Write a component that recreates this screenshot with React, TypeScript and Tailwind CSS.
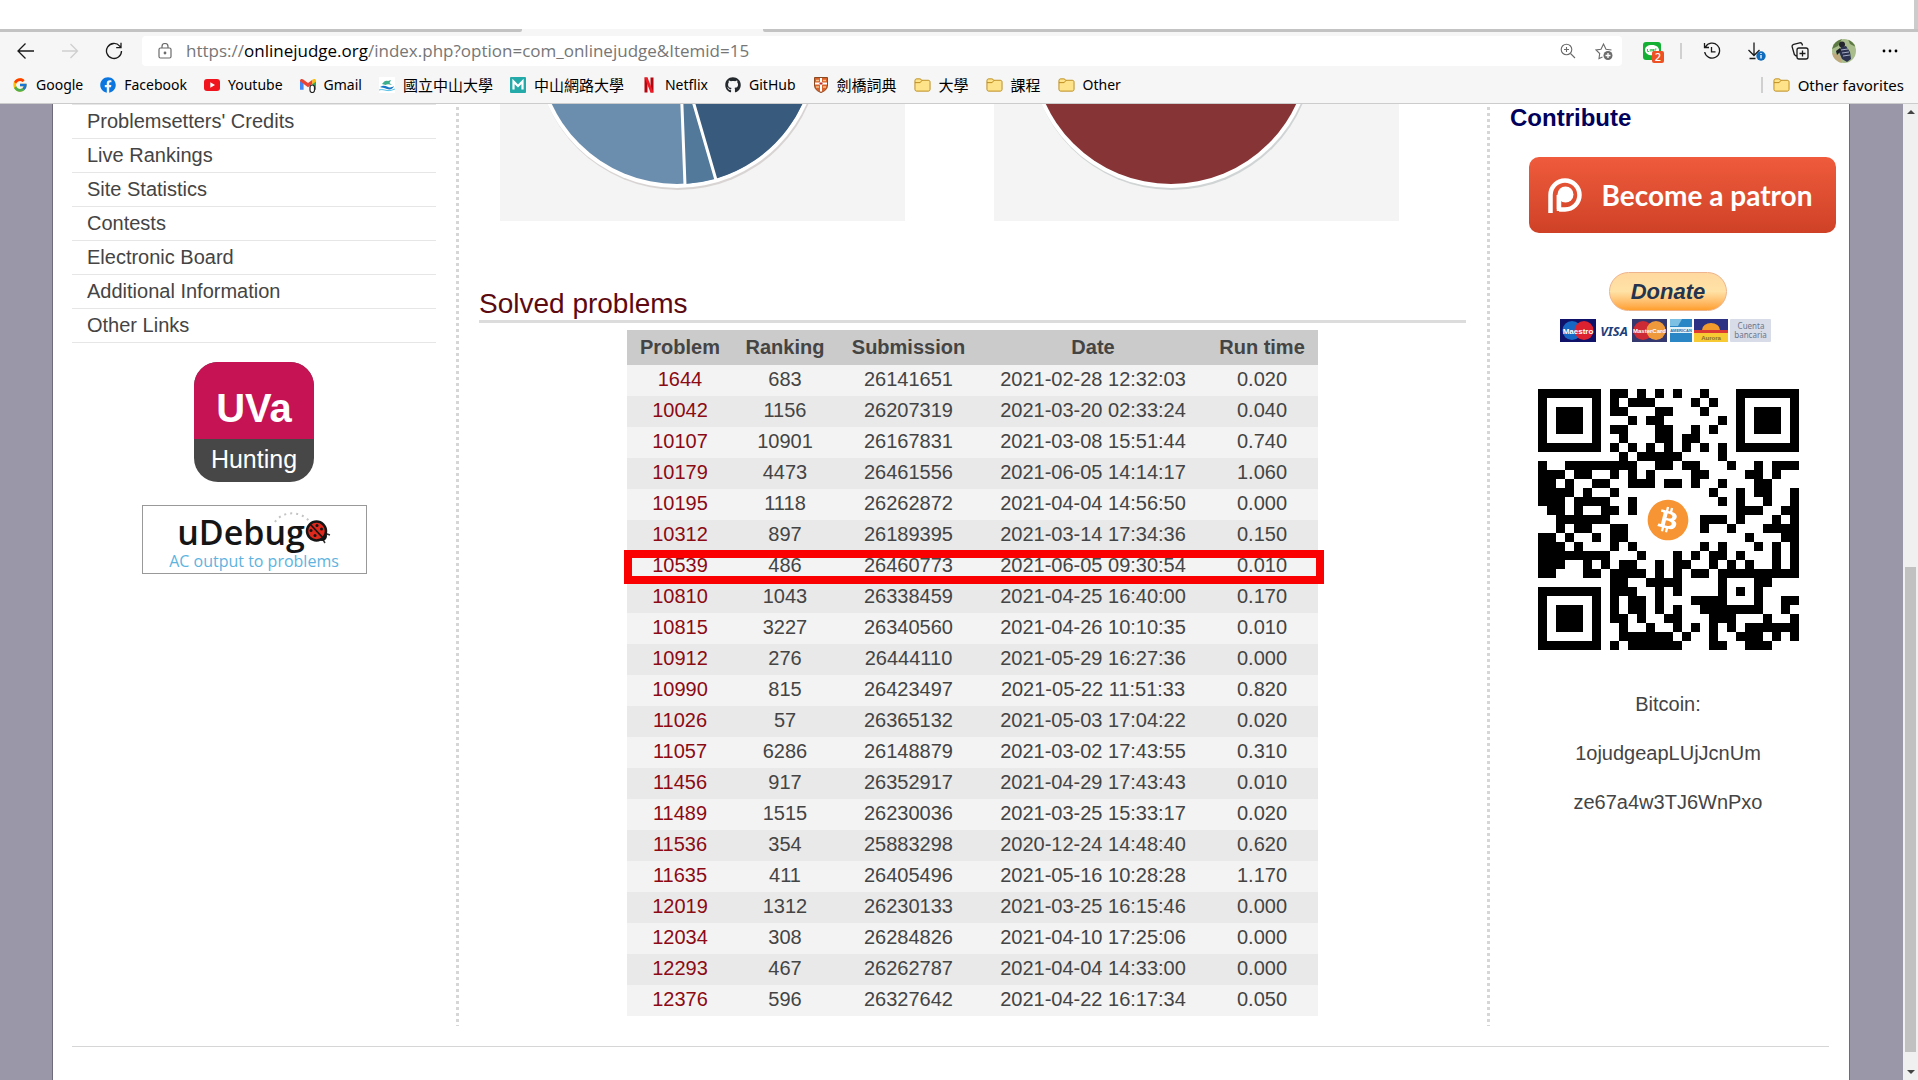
import React from 'react';
import type { ReactNode } from 'react';
import { FaFacebook, FaGithub, FaBitcoin } from 'react-icons/fa';
import { FcGoogle } from 'react-icons/fc';

type Row = [string, string, string, string, string];

const rows: Row[] = [
  ['1644', '683', '26141651', '2021-02-28 12:32:03', '0.020'],
  ['10042', '1156', '26207319', '2021-03-20 02:33:24', '0.040'],
  ['10107', '10901', '26167831', '2021-03-08 15:51:44', '0.740'],
  ['10179', '4473', '26461556', '2021-06-05 14:14:17', '1.060'],
  ['10195', '1118', '26262872', '2021-04-04 14:56:50', '0.000'],
  ['10312', '897', '26189395', '2021-03-14 17:34:36', '0.150'],
  ['10539', '486', '26460773', '2021-06-05 09:30:54', '0.010'],
  ['10810', '1043', '26338459', '2021-04-25 16:40:00', '0.170'],
  ['10815', '3227', '26340560', '2021-04-26 10:10:35', '0.010'],
  ['10912', '276', '26444110', '2021-05-29 16:27:36', '0.000'],
  ['10990', '815', '26423497', '2021-05-22 11:51:33', '0.820'],
  ['11026', '57', '26365132', '2021-05-03 17:04:22', '0.020'],
  ['11057', '6286', '26148879', '2021-03-02 17:43:55', '0.310'],
  ['11456', '917', '26352917', '2021-04-29 17:43:43', '0.010'],
  ['11489', '1515', '26230036', '2021-03-25 15:33:17', '0.020'],
  ['11536', '354', '25883298', '2020-12-24 14:48:40', '0.620'],
  ['11635', '411', '26405496', '2021-05-16 10:28:28', '1.170'],
  ['12019', '1312', '26230133', '2021-03-25 16:15:46', '0.000'],
  ['12034', '308', '26284826', '2021-04-10 17:25:06', '0.000'],
  ['12293', '467', '26262787', '2021-04-04 14:33:00', '0.000'],
  ['12376', '596', '26327642', '2021-04-22 16:17:34', '0.050'],
];

const menu = [
  "Problemsetters' Credits",
  'Live Rankings',
  'Site Statistics',
  'Contests',
  'Electronic Board',
  'Additional Information',
  'Other Links',
];

/* Dark module runs of each QR row, as "start-end" or a single column. */
const qrRows = [
  '0-6 8-9 11 13 15 18 22-28',
  '0 6 8 10-12 17 19 22 28',
  '0 2-4 6 8-9 13-14 18 22 24-26 28',
  '0 2-4 6 10 12-13 20 22 24-26 28',
  '0 2-4 6 8-9 13-14 17 19 22 24-26 28',
  '0 6 9 13-14 16-17 22 28',
  '0-6 8 10 12 14 16 18 20 22-28',
  '9 11-15 20',
  '0 3-10 13-14 16-17 21 24 26-28',
  '0-2 4-5 8 10 12 17-18 23-24 26',
  '0-1 3 6-7 10-12 14-15 17 20 24-25',
  '0-3 5 8 19 22 24-25 28',
  '0-2 4-7 10 20 22 25 28',
  '1-2 4 7-8 10 22-24 27-28',
  '2-7 18-20 22 26 28',
  '2 4-5 8-9 18 21 25-28',
  '0-1 3 6 8-9 23 27-28',
  '0-2 4 8 10 18 20 24 26 28',
  '0-7 11 15 17 19-20 22 26 28',
  '0-2 5 7 9-10 13 15-16 19 21 23 26 28',
  '0-1 5-6 8-11 13 15 17-18 20-28',
  '8-9 12-15 20 24-25',
  '0-6 8-10 13 15 20 22 24',
  '0 6 8 10-11 13 17-20 24 27-28',
  '0 2-4 6 8 10-11 13 15 18-24 27',
  '0 2-4 6 8-9 11 14-15 19-21 25 28',
  '0 2-4 6 9 12 15 17 19 21 23-28',
  '0 6 9-14 16 19 22-24 26 28',
  '0-6 8 10-15 19-20 23-25',
];

function QrCode() {
  return (
    <div className="relative size-[261px]">
      <svg viewBox="0 0 29 29" className="size-full" shapeRendering="crispEdges" role="img" aria-label="Bitcoin address QR code">
        {qrRows.flatMap((line, y) =>
          line.split(' ').map((run) => {
            const [a, b] = run.split('-').map(Number);
            const end = b === undefined ? a : b;
            return <rect key={`${y}-${a}`} x={a} y={y} width={end - a + 1} height={1} />;
          }),
        )}
      </svg>
      <FaBitcoin className="absolute inset-0 m-auto size-[42px] text-[#f79433]" />
    </div>
  );
}

function Folder() {
  return (
    <svg viewBox="0 0 18 16" className="h-4 w-[17px]" fill="#ffe38a" stroke="#b98a1c" strokeWidth="1">
      <path d="M1 3.5C1 2.2 1.7 1.500 3 1.500h3.200c1 0 1.300.6 2 1.500H15c1.300 0 2 .7 2 2v7.500c0 1.300-.7 2-2 2H3c-1.300 0-2-.7-2-2z" />
      <path d="M1 5.500h5.500l2-2.500" fill="none" />
    </svg>
  );
}

function YoutubeIcon() {
  return (
    <svg viewBox="0 0 16 16" className="size-4">
      <rect x="0" y="2" width="16" height="12" rx="3" fill="#f0141e" />
      <path d="M6.300 5.200v5.600L11 8z" fill="#fff" />
    </svg>
  );
}

function GmailIcon() {
  return (
    <svg viewBox="0 0 16 16" className="size-4">
      <path d="M0 3.500v9.300h3.600V6.500z" fill="#4285f4" />
      <path d="M12.400 6.500v6.300H16V3.500z" fill="#34a853" />
      <path d="M0 4c0-2 2-2.500 3.600-1.300L8 6l4.400-3.300v4.100L8 10.200 0 4.300z" fill="#ea4335" />
      <path d="M12.400 2.700C14 1.500 16 2 16 4v.6l-3.600 2.700z" fill="#fbbc04" />
      <rect x="10" y="8" width="4.500" height="7.500" rx="2.200" fill="#fff" stroke="#222" strokeWidth="1.200" />
    </svg>
  );
}

function WaveIcon() {
  return (
    <svg viewBox="0 0 16 16" className="size-4">
      <rect width="16" height="16" fill="#fff" />
      <path d="M3 7c2-3 4-4 6-3l3-1-1.500 3L13 8c-3-1-5-1-6.500 0z" fill="#3cae8e" />
      <path d="M1 10c3-2 5-1.500 7-.5s4 1.500 7-.5c-1 3-4 4-7 3s-5-1.500-7-2z" fill="#1677c8" />
      <path d="M0 13c3-1 5 0 8 .5S13 13 16 12" stroke="#59c3e8" fill="none" />
    </svg>
  );
}

function MIcon() {
  return (
    <svg viewBox="0 0 16 16" className="size-4">
      <rect width="16" height="16" rx="1" fill="#24aaa8" />
      <path d="M3.500 12.500v-8L8 9l4.500-4.500v8" fill="none" stroke="#fff" strokeWidth="2.200" />
    </svg>
  );
}

function NetflixIcon() {
  return (
    <svg viewBox="0 0 16 16" className="size-4">
      <path d="M3.500.500h3v15h-3zM9.500.500h3v15h-3z" fill="#b1060f" />
      <path d="M3.500.500h3l6 15h-3z" fill="#ef1a25" />
    </svg>
  );
}

function ShieldIcon() {
  return (
    <svg viewBox="0 0 16 16" className="size-4">
      <path d="M1.500.500h13v7.500c0 4-2.500 6-6.500 7.500-4-1.500-6.500-3.500-6.500-7.500z" fill="#d9622b" stroke="#8b4a22" />
      <path d="M8 1v13.500M2 6.500h12" stroke="#fff" strokeWidth="2" />
      <path d="M3 3.500h3M10 3.500h3M3 10h3M10 10h3" stroke="#f6c48d" strokeWidth="1.500" />
      <path d="M8 5v3M6.500 6.500h3" stroke="#c02a2a" />
    </svg>
  );
}

const bookmarks: { label: string; icon: ReactNode; cjk?: boolean }[] = [
  { label: 'Google', icon: <FcGoogle className="size-4" /> },
  { label: 'Facebook', icon: <FaFacebook className="size-4 text-[#0b76e0]" /> },
  { label: 'Youtube', icon: <YoutubeIcon /> },
  { label: 'Gmail', icon: <GmailIcon /> },
  { label: '國立中山大學', icon: <WaveIcon />, cjk: true },
  { label: '中山網路大學', icon: <MIcon />, cjk: true },
  { label: 'Netflix', icon: <NetflixIcon /> },
  { label: 'GitHub', icon: <FaGithub className="size-4 text-[#24292e]" /> },
  { label: '劍橋詞典', icon: <ShieldIcon />, cjk: true },
  { label: '大學', icon: <Folder />, cjk: true },
  { label: '課程', icon: <Folder />, cjk: true },
  { label: 'Other', icon: <Folder /> },
];

function ToolButton({ label, children }: { label: string; children: ReactNode }) {
  return (
    <button type="button" aria-label={label} className="flex size-7 shrink-0 items-center justify-center">
      {children}
    </button>
  );
}

function Toolbar() {
  return (
    <div className="flex h-[38px] items-center pr-[14px] pl-3">
      <div className="flex w-[130px] gap-4">
        <ToolButton label="Back">
          <svg viewBox="0 0 18 18" className="size-[18px]" fill="none" stroke="#1a1a1a" strokeWidth="1.300">
            <path d="M17 9H1.500M8.500 1.500 1 9l7.500 7.500" />
          </svg>
        </ToolButton>
        <ToolButton label="Forward">
          <svg viewBox="0 0 18 18" className="size-[18px]" fill="none" stroke="#cfcfcf" strokeWidth="1.300">
            <path d="M1 9h15.500M9.500 2 16.500 9l-7 7" />
          </svg>
        </ToolButton>
        <ToolButton label="Refresh">
          <svg viewBox="0 0 18 18" className="size-[18px]" fill="none" stroke="#1a1a1a" strokeWidth="1.300">
            <path d="M16.500 9A7.500 7.500 0 1 1 14.700 4.100L15.800 5.500M16 .800V5.600H11.200" />
          </svg>
        </ToolButton>
      </div>
      <div className="flex h-[30px] flex-1 items-center rounded bg-white pr-1 pl-4">
        <svg viewBox="0 0 14 16" className="h-4 w-[14px]" fill="none" stroke="#6b6b6b" strokeWidth="1.200">
          <rect x="1" y="5" width="12" height="10" rx="1.500" />
          <path d="M4 5V3.500a3 3 0 0 1 6 0V5" />
          <circle cx="7" cy="10" r=".8" fill="#6b6b6b" />
        </svg>
        <p className="flex-1 pl-[14px] font-['Open_Sans','Noto_Sans_CJK_TC',sans-serif] text-[17px] leading-6 text-[#767676]">
          https://<span className="text-black">onlinejudge.org</span>/index.php?option=com_onlinejudge&amp;Itemid=15
        </p>
        <div className="flex gap-2">
          <ToolButton label="Zoom">
            <svg viewBox="0 0 16 16" className="size-4" fill="none" stroke="#6b6b6b" strokeWidth="1.100">
              <circle cx="6.500" cy="6.500" r="5.300" />
              <path d="M10.500 10.500 15 15M4 6.500h5M6.500 4v5" />
            </svg>
          </ToolButton>
          <ToolButton label="Add to favorites">
            <svg viewBox="0 0 18 18" className="size-[18px]" fill="none" stroke="#6b6b6b" strokeWidth="1.100">
              <path d="M7.500 15 4 16.500l.7-5L1 8l5-.8L8.500 2 11 7.200l5.500.8" />
              <circle cx="13" cy="13.500" r="4.500" fill="#6b6b6b" stroke="none" />
              <path d="M10.500 13.500h5M13 11v5" stroke="#fff" strokeWidth="1.300" />
            </svg>
          </ToolButton>
        </div>
      </div>
      <div className="flex items-center gap-4 pl-[18px]">
        <button type="button" aria-label="LINE, 2 messages" className="relative flex size-6 items-center justify-center">
          <svg viewBox="0 0 18 18" className="size-[18px]">
            <rect width="18" height="18" rx="3" fill="#14b034" />
            <path d="M9 3c4.500 0 7 2.500 7 5 0 3-3.500 5.500-7 7.500v-2.200c-4 0-7-2.300-7-5.300s2.500-5 7-5z" fill="#fff" />
            <path d="M4.500 7v2.500H6M7.300 7v2.500M8.800 9.500V7l1.700 2.500V7M13.500 7H12v2.500h1.500" fill="none" stroke="#14b034" strokeWidth=".8" />
          </svg>
          <span className="absolute top-3 left-3 flex size-3 items-center justify-center rounded-xs bg-[#ee5124] font-['Noto_Sans',sans-serif] text-[11px] leading-3 font-medium text-white">
            2
          </span>
        </button>
        <span className="h-4 w-0.5 bg-[#d0d0d0]" />
        <div className="flex items-center gap-4">
          <ToolButton label="History">
            <svg viewBox="0 0 18 18" className="size-[18px]" fill="none" stroke="#1a1a1a" strokeWidth="1.300">
              <path d="M2.500 5A7.500 7.500 0 1 1 1.700 10M1.500 1v4.500H6M8.500 5v4.800h4" />
            </svg>
          </ToolButton>
          <ToolButton label="Downloads">
            <svg viewBox="0 0 20 20" className="size-5" fill="none" stroke="#1a1a1a" strokeWidth="1.300">
              <path d="M8 1.500v13M2.500 9 8 14.500 13.500 9M3.500 17.500h6" />
              <circle cx="15" cy="15" r="4.700" fill="#0f6cbd" stroke="none" />
              <path d="M15 14v3.500M15 12v1" stroke="#fff" />
            </svg>
          </ToolButton>
          <ToolButton label="Collections">
            <svg viewBox="0 0 18 18" className="size-[18px]" fill="none" stroke="#1a1a1a" strokeWidth="1.300">
              <rect x="6" y="6" width="11" height="11" rx="2" />
              <path d="M11.500 8.500v6M8.500 11.500h6M3.500 13 1.200 5c-.4-1.500.2-2.300 1.500-2.700l6-1.500c1.300-.3 2 .2 2.500 1.500l.3 1.200M6 14c-1 0-2-.5-2.500-1.500" />
            </svg>
          </ToolButton>
        </div>
        <button type="button" aria-label="Profile" className="mr-1 ml-0.5">
          <svg viewBox="0 0 24 24" className="size-6">
            <defs>
              <clipPath id="avatar">
                <circle cx="12" cy="12" r="12" />
              </clipPath>
            </defs>
            <g clipPath="url(#avatar)">
              <rect width="24" height="24" fill="#a9bd8c" />
              <path d="M0 0h10l-4 7-6 3zM16 0h8v8l-6-3z" fill="#5e7a44" />
              <path d="M0 14l8 2 2 8H0z" fill="#bfa97c" />
              <circle cx="10" cy="5.500" r="3" fill="#24262e" />
              <path d="M9 8l5-1 4 6 1 7-4 3-5-3-3-7z" fill="#2b3350" />
              <path d="M9 11l7-1M10 14l7-1M11 17l7-1" stroke="#c3cbe0" strokeWidth=".8" />
              <path d="M4 12l4-3 1 3-4 4z" fill="#1d1f27" />
            </g>
          </svg>
        </button>
        <ToolButton label="Settings and more">
          <svg viewBox="0 0 16 4" className="h-1 w-4">
            <circle cx="2" cy="2" r="1.400" />
            <circle cx="8" cy="2" r="1.400" />
            <circle cx="14" cy="2" r="1.400" />
          </svg>
        </ToolButton>
      </div>
    </div>
  );
}

function BookmarkBar() {
  return (
    <nav
      aria-label="Favorites bar"
      className="flex h-[34px] items-center justify-between border-b border-[#cccccc] pr-[14px] pb-1 pl-3 font-['Noto_Sans','Noto_Sans_CJK_TC',sans-serif] text-black"
    >
      <div className="flex gap-[17px]">
        {bookmarks.map((b) => (
          <a key={b.label} href="#" className="flex items-center gap-2 whitespace-nowrap">
            {b.icon}
            <span className={b.cjk ? 'text-[15px] leading-6' : 'text-sm leading-6'}>{b.label}</span>
          </a>
        ))}
      </div>
      <a href="#" className="flex items-center gap-2 text-[15px] leading-6">
        <span className="mr-0.5 h-4 w-0.5 bg-[#d0d0d0]" />
        <Folder />
        Other favorites
      </a>
    </nav>
  );
}

function Dots() {
  return <div className="bg-[repeating-linear-gradient(to_bottom,#ffffff_0px,#ffffff_3px,#d6d6d6_3px,#d6d6d6_6px)]" />;
}

function Sidebar() {
  return (
    <aside className="flex flex-col items-center pr-5">
      <ul className="w-full border-t border-[#e6e6e6]">
        {menu.map((m) => (
          <li key={m} className="h-[34px] border-b border-[#e6e6e6] pl-[15px] leading-8">
            <a href="#">{m}</a>
          </li>
        ))}
      </ul>
      <a href="#" className="mt-[19px] block w-[120px] overflow-hidden rounded-3xl bg-[#474747] text-center text-white">
        <span className="block h-[77px] bg-[#c51353] pt-6 text-[40px] leading-[44px] font-bold">UVa</span>
        <span className="block h-[43px] text-[25px] leading-10">Hunting</span>
      </a>
      <a
        href="#"
        className="relative mt-[23px] flex h-[69px] w-[225px] flex-col items-center border border-[#999999] font-['Open_Sans',sans-serif]"
      >
        <span className="flex items-center pt-2">
          <span className="text-[34px] leading-9 font-semibold text-[#151515]">uDebug</span>
          <svg viewBox="0 0 26 26" className="size-[26px]">
            <path d="M19 14l6 2M17 19l3 5" stroke="#333" strokeWidth="1.500" />
            <circle cx="17" cy="17" r="5" fill="#111" />
            <circle cx="11.500" cy="12" r="9.500" fill="#e0281c" stroke="#151515" strokeWidth="2.500" />
            <path d="M5 5l14 15" stroke="#151515" strokeWidth="1.800" />
            <g fill="#151515">
              <circle cx="12" cy="6.500" r="1.500" />
              <circle cx="16.500" cy="10" r="1.500" />
              <circle cx="6" cy="11.500" r="1.500" />
              <circle cx="10" cy="16.500" r="1.500" />
            </g>
          </svg>
        </span>
        <svg viewBox="0 0 40 14" className="absolute top-1 left-[130px] h-[14px] w-10">
          <path d="M2 12C9 1 28 0 37 12" fill="none" stroke="#c4c4c4" strokeWidth="2" strokeDasharray="2 4" />
        </svg>
        <span className="text-base leading-[22px] font-medium text-[#5db3df]">AC output to problems</span>
      </a>
    </aside>
  );
}

function Pies() {
  return (
    <div className="grid grid-cols-2">
      <div className="pl-[21px]">
        <svg viewBox="0 0 405 117" className="h-[117px] w-[405px] bg-[#f4f4f4]" role="img" aria-label="Submission statistics">
          <circle cx="178" cy="-56" r="142" fill="#d9d4d4" />
          <circle cx="177" cy="-58" r="142" fill="#fff" />
          <circle cx="177" cy="-58" r="138" fill="#6b8dae" />
          <path d="M181 -58 185 80A138 138 0 0 0 215 75L175 -58z" fill="#52789a" />
          <path d="M177 -58 215 75A138 138 0 0 0 315 -58z" fill="#385a7c" />
          <path d="M181.500 -10 185 81M191 -10 216 76" stroke="#fff" strokeWidth="3" />
        </svg>
      </div>
      <div className="pl-[21px]">
        <svg viewBox="0 0 405 117" className="h-[117px] w-[405px] bg-[#f4f4f4]" role="img" aria-label="Verdict statistics">
          <circle cx="178" cy="-56" r="142" fill="#d0d4d4" />
          <circle cx="177" cy="-58" r="142" fill="#fff" />
          <circle cx="177" cy="-58" r="138" fill="#863436" />
        </svg>
      </div>
    </div>
  );
}

function SolvedTable() {
  return (
    <div className="mx-auto mt-[7px] w-[691px]">
      <table className="w-full table-fixed border-collapse text-center">
        <colgroup>
          <col className="w-[106px]" />
          <col className="w-[104px]" />
          <col className="w-[143px]" />
          <col className="w-[226px]" />
          <col className="w-[112px]" />
        </colgroup>
        <thead>
          <tr className="h-[35px] bg-[#cbcbcb] text-[#444444]">
            {['Problem', 'Ranking', 'Submission', 'Date', 'Run time'].map((h) => (
              <th key={h} scope="col" className="p-0 pb-0.5 leading-7 font-bold">
                {h}
              </th>
            ))}
          </tr>
        </thead>
        <tbody>
          {rows.map((r) => (
            <tr key={r[0]} className="h-[31px] odd:bg-[#f3f3f3] even:bg-[#e9e9e9]">
              <td className="relative p-0 align-top leading-7">
                <a href="#" className="text-[#8c0a14]">
                  {r[0]}
                </a>
                {r[0] === '10539' && <span className="absolute -top-px -left-[3px] h-[34px] w-[700px] border-8 border-[#fb0000]" />}
              </td>
              {r.slice(1).map((c, i) => (
                <td key={i} className="p-0 align-top leading-7">
                  {c}
                </td>
              ))}
            </tr>
          ))}
        </tbody>
      </table>
    </div>
  );
}

function PaymentCards() {
  return (
    <svg viewBox="0 0 212 23" className="mt-2 mr-1 h-[23px] w-[212px]" fontFamily="'Liberation Sans', sans-serif" fontWeight="bold">
      <rect width="36" height="23" fill="#10126a" />
      <circle cx="12" cy="11.500" r="9.500" fill="#1768c4" />
      <circle cx="24" cy="11.500" r="9.500" fill="#dc2230" />
      <text x="18" y="14.500" fontSize="8" fill="#fff" textAnchor="middle">Maestro</text>
      <text x="54" y="17" fontSize="13" fontStyle="italic" fill="#1c3f7c" textAnchor="middle" fontFamily="'Noto Sans', sans-serif">VISA</text>
      <rect x="72" width="35" height="23" fill="#34386f" />
      <circle cx="83" cy="11.500" r="9.500" fill="#cc2a34" />
      <circle cx="96" cy="11.500" r="9.500" fill="#ee9a3c" />
      <text x="89.500" y="14" fontSize="6" fill="#fff" textAnchor="middle">MasterCard</text>
      <rect x="110" width="22" height="23" fill="#2a86c4" />
      <path d="M110 0h12l-4 7h-8z" fill="#7cc0e4" />
      <path d="M110 8h22v6h-22z" fill="#e4f2fa" />
      <text x="121" y="13" fontSize="4" fill="#2a6fa8" textAnchor="middle">AMERICAN</text>
      <rect x="134" width="34" height="23" fill="#2c3184" />
      <path d="M134 11h34v3h-34z" fill="#dd3a34" />
      <path d="M142 11a9 7 0 0 1 18 0z" fill="#f29a2c" />
      <rect x="134" y="14" width="34" height="9" fill="#f7c932" />
      <text x="151" y="21" fontSize="6" fill="#8a6c2c" textAnchor="middle">Aurora</text>
      <rect x="170" width="41" height="23" rx="1" fill="#d8dce8" />
      <g fill="#6c768c" fontSize="8" fontWeight="normal" textAnchor="middle" fontFamily="'Noto Sans', sans-serif">
        <text x="191" y="10">Cuenta</text>
        <text x="190.500" y="19">bancaria</text>
      </g>
    </svg>
  );
}

function Contribute() {
  return (
    <aside className="pl-5">
      <h3 className="text-2xl leading-7 font-bold text-[#00005c]">Contribute</h3>
      <div className="flex w-[316px] flex-col items-center">
        <a
          href="#"
          className="mt-[25px] ml-[28px] flex h-[76px] w-[307px] shrink-0 items-center rounded-[10px] bg-linear-to-b from-[#ef5b3c] to-[#cf4126] pl-[19px] text-white"
        >
          <svg viewBox="0 0 34 36" className="h-9 w-[34px]" fill="none" stroke="#fff">
            <path d="M2.500 36V18a14.500 14.500 0 1 1 14.500 14.500H11" strokeWidth="4.500" />
            <path d="M11 34V18" strokeWidth="4.500" />
            <circle cx="17.500" cy="17.500" r="8" fill="#fff" stroke="none" />
            <path d="M10.500 18v14" strokeWidth="3.500" />
          </svg>
          <span className="pl-5 font-['Lato',sans-serif] text-[28px] leading-9 font-bold">Become a patron</span>
        </a>
        <button
          type="button"
          className="mt-[39px] h-[39px] w-[118px] rounded-full border border-[#eeb48c] bg-linear-to-b from-[#ffd9a0] via-[#ffe2a6] to-[#ff9f2a] text-[22px] leading-6 font-bold text-[#25344e] italic"
        >
          Donate
        </button>
        <PaymentCards />
        <div className="mt-[47px]">
          <QrCode />
        </div>
        <p className="mt-[42px] leading-6">Bitcoin:</p>
        <p className="mt-[25px] leading-6">1ojudgeapLUjJcnUm</p>
        <p className="mt-[25px] leading-6">ze67a4w3TJ6WnPxo</p>
      </div>
    </aside>
  );
}

export default function App() {
  return (
    <div className="flex min-h-screen flex-col overflow-hidden bg-white">
      <header className="bg-[#f6f6f6]">
        <div className="h-[29px] border-r-4 border-[#cccccc] bg-white" />
        <div className="flex h-[3px] gap-[241px]">
          <span className="w-[522px] rounded-br-xs bg-[#c3c3c3]" />
          <span className="flex-1 rounded-bl-xs bg-[#c3c3c3]" />
        </div>
        <Toolbar />
        <BookmarkBar />
      </header>
      <div className="flex flex-1 bg-[#9997a8]">
        <main className="ml-[52px] flex-1 border-x border-[#6d6b7c] bg-white pr-5 pl-[19px] font-['Liberation_Sans',sans-serif] text-xl text-[#444444]">
          <div className="grid grid-cols-[384px_3px_minmax(0,1fr)_3px_339px]">
            <Sidebar />
            <Dots />
            <section className="pr-[21px] pb-[10px] pl-5">
              <Pies />
              <h2 className="mt-[65px] border-b-[3px] border-[#dcdcdc] pt-0.5 text-[28px] leading-8 text-[#5c0a10]">Solved problems</h2>
              <SolvedTable />
            </section>
            <Dots />
            <Contribute />
          </div>
          <hr className="mt-5 border-[#d6d6d6]" />
        </main>
        <div className="ml-[53px] flex w-[15px] flex-col items-center bg-[#f0f0f0]">
          <svg viewBox="0 0 8 4" className="mt-1.5 h-1 w-2">
            <path d="M0 4 4 0l4 4z" fill="#444" />
          </svg>
          <div className="flex-1" />
          <div className="h-[485px] w-[11px] bg-[#c1c1c1]" />
          <svg viewBox="0 0 8 4" className="mt-[18px] mb-1.5 h-1 w-2">
            <path d="M0 0l4 4 4-4z" fill="#444" />
          </svg>
        </div>
      </div>
    </div>
  );
}
